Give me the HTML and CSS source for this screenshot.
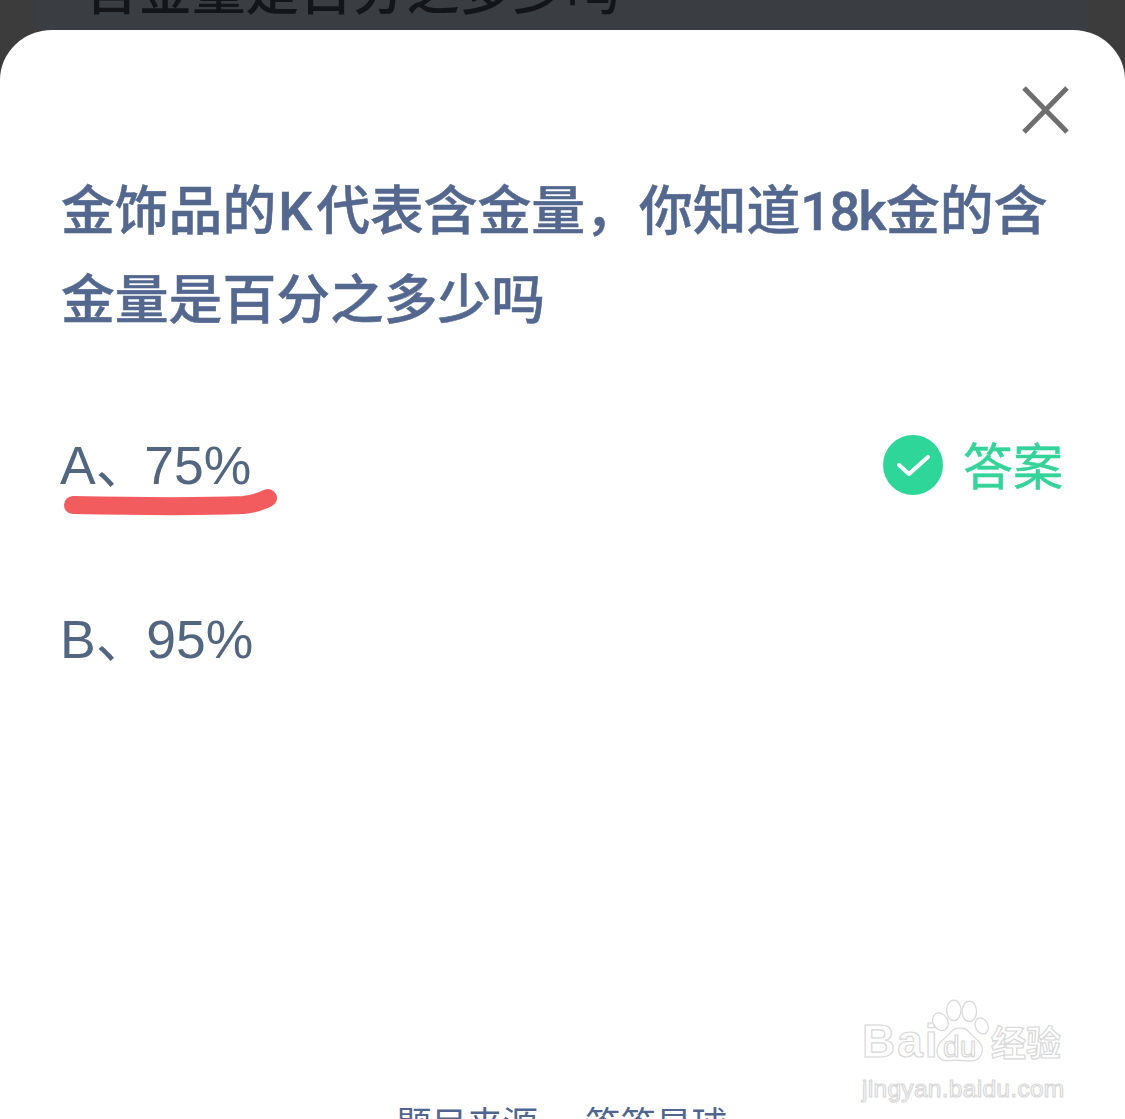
FILE: index.html
```html
<!DOCTYPE html>
<html lang="zh">
<head>
<meta charset="utf-8">
<title>答题</title>
<link rel="stylesheet" href="styles.css">
</head>
<body>
<div class="screen">
  <div class="backdrop">
    <div class="backdrop-panel">
      <p class="backdrop-text">含金量是百分之多少吗</p>
    </div>
  </div>
  <main class="sheet">
    <div class="close-row">
      <svg class="close" viewBox="0 0 48 48" width="48" height="48" aria-label="关闭">
        <path d="M3 2 L46 46 M46 2 L3 46"/>
      </svg>
    </div>
    <h1 class="question">金饰品的<span class="cap">K</span>代表含金量，你知道<span class="num">18k</span>金的含<br>金量是百分之多少吗</h1>
    <div class="options">
      <div class="option">
        <div class="option-label">
          <span>A<span class="sep">、</span>75%</span>
          <svg class="scribble" viewBox="0 0 216 28" width="216" height="28">
            <path d="M10 17 C60 18 130 19 180 17 C193 16 198 13 205 10"/>
          </svg>
        </div>
        <div class="answer">
          <svg class="check" viewBox="0 0 60 60" width="60" height="60">
            <circle cx="30" cy="30" r="30"/>
            <path d="M16 30 L26 39 L45 22"/>
          </svg>
          <span class="answer-text">答案</span>
        </div>
      </div>
      <div class="option">
        <div class="option-label"><span>B<span class="sep sep-b">、</span>95%</span></div>
      </div>
    </div>
    <div class="source"><span>题目来源</span><span>答答星球</span></div>
    <div class="watermark">
      <div class="wm-main">
        <span class="wm-bai">Bai</span>
        <svg class="wm-paw" viewBox="0 0 56 62" width="58" height="64">
          <ellipse cx="9" cy="22" rx="7" ry="9" transform="rotate(-30 9 22)"/>
          <ellipse cx="22" cy="11" rx="7" ry="10"/>
          <ellipse cx="37" cy="12" rx="7" ry="10"/>
          <ellipse cx="49" cy="26" rx="6" ry="8" transform="rotate(-25 49 26)"/>
          <path d="M28 28 C36 28 38 35 45 40 C53 47 50 60 38 60 C32 60 24 58 16 60 C5 60 2 48 11 40 C18 35 20 28 28 28 Z"/>
        </svg>
        <span class="wm-du">du</span>
        <span class="wm-cn">经验</span>
      </div>
      <div class="wm-url">jingyan.baidu.com</div>
    </div>
  </main>
</div>
</body>
</html>
```
FILE: styles.css
```css
* { box-sizing: border-box; }
html, body { margin: 0; padding: 0; }
body { background: #3b3b3b; font-family: "Liberation Sans", "Noto Sans CJK SC", sans-serif; }
.screen { width: 1125px; height: 1119px; overflow: hidden; display: flex; flex-direction: column; background: #3c3c3c; }
.backdrop { height: 30px; flex: none; padding: 0 36px 0 37px; }
.backdrop-panel { height: 30px; background: #3a3d42; padding-left: 48px; overflow: hidden; }
.backdrop-text { margin: -49px 0 0; font: 500 53.5px/72px "Noto Sans CJK SC", sans-serif; color: #141518; white-space: nowrap; }
.sheet { position: relative; flex: 1; background: #fff; border-radius: 52px 52px 0 0 / 50px 50px 0 0; padding: 56px 62px 0 60px; min-height: 0; }
.close-row { display: flex; justify-content: flex-end; margin-right: -6px; height: 48px; }
.close { fill: none; stroke: #6e6e6e; stroke-width: 5; }
.question { margin: 28px 0 0 1px; width: 1000px; font: 500 53.8px/89px "Noto Sans CJK SC", sans-serif; color: #54688f; -webkit-text-stroke: .5px #54688f; }
.cap { font-family: "Roboto", sans-serif; line-height: 1; margin-left: 2px; margin-right: 4px; }
.num { font-family: "Roboto", sans-serif; line-height: 1; letter-spacing: -1.5px; margin-right: 1px; }
.options { margin-top: 100px; display: flex; flex-direction: column; gap: 122px; }
.option { display: flex; justify-content: space-between; align-items: flex-start; height: 52px; }
.option-label { position: relative; font: 400 53.5px/52px "Liberation Sans", "Noto Sans CJK SC", sans-serif; color: #53667f; white-space: nowrap; }
.sep { margin-right: -5px; }
.sep-b { margin-right: -3px; }
.scribble { position: absolute; left: 3px; top: 48px; fill: none; stroke: #f25c5f; stroke-width: 18; stroke-linecap: round; }
.answer { display: flex; align-items: center; gap: 20px; color: #34d39a; font: 400 50px/60px "Noto Sans CJK SC", sans-serif; margin-top: -7px; -webkit-text-stroke: .5px #34d39a; }
.answer-text { padding-bottom: 4px; }
.check circle { fill: #2fd699; }
.check path { fill: none; stroke: #fff; stroke-width: 4; stroke-linecap: round; stroke-linejoin: round; }
.source { position: absolute; left: 396px; top: 1070px; display: flex; gap: 47px; font: 400 35.5px/44px "Noto Sans CJK SC", sans-serif; color: #50658f; white-space: nowrap; }
.watermark { position: absolute; left: 862px; top: 969px; width: 210px; color: #fff; -webkit-text-stroke: 1.2px #d8d8d8; }
.wm-main { position: relative; height: 76px; }
.wm-bai { position: absolute; left: 0; top: 17px; font: 700 46px/50px "Liberation Sans", sans-serif; letter-spacing: 2px; }
.wm-paw { position: absolute; left: 69px; top: 0; fill: #fff; stroke: #d8d8d8; stroke-width: 1.2; }
.wm-du { position: absolute; left: 81px; top: 33px; font: 400 30px/30px "Liberation Sans", sans-serif; }
.wm-cn { position: absolute; left: 129px; top: 20px; font: 700 35px/44px "Noto Sans CJK SC", sans-serif; white-space: nowrap; }
.wm-url { font: 400 24.5px/28px "Liberation Sans", sans-serif; white-space: nowrap; letter-spacing: .3px; margin-top: 0; }
```
